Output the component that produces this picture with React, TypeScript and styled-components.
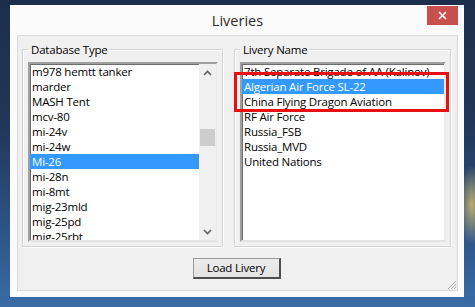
import React from "react";
import styled, { createGlobalStyle } from "styled-components";

const GlobalStyle = createGlobalStyle`
  html, body {
    margin: 0;
    padding: 0;
    width: 475px;
    height: 307px;
    overflow: hidden;
  }
  body {
    font-family: "Open Sans", "Noto Sans", "Liberation Sans", sans-serif;
    background:
      radial-gradient(ellipse 14px 40px at 472px 205px, rgba(214, 190, 110, 0.85), rgba(214, 190, 110, 0) 100%),
      linear-gradient(to bottom, #1d2e4c 0%, #213658 40%, #2d5488 75%, #3a6ca6 100%);
  }
`;

const Desktop = styled.div`
  box-sizing: border-box;
  width: 475px;
  height: 307px;
  padding: 5px 0 0 10px;
`;

const Window = styled.div`
  box-sizing: border-box;
  width: 454px;
  height: 292px;
  background: #fbfbfb;
  padding: 0 6px 6px 7px;
  display: flex;
  flex-direction: column;
`;

const TitleBar = styled.div`
  height: 30px;
  display: grid;
  grid-template-columns: 1fr auto 1fr;
  align-items: start;
`;

const Title = styled.div`
  grid-column: 2;
  font-size: 14.5px;
  line-height: 30px;
  padding-top: 1px;
  color: #2b2b2b;
`;

const CloseButton = styled.div`
  grid-column: 3;
  justify-self: end;
  margin-top: 1px;
  width: 31px;
  height: 19px;
  background: #c7504f;
  display: flex;
  align-items: center;
  justify-content: center;
`;

const Content = styled.div`
  position: relative;
  flex: 1;
  box-sizing: border-box;
  background: #f0f0f0;
  border: 1px solid #dadada;
  padding: 6px 6px 11px 4px;
  display: flex;
  flex-direction: column;
  align-items: center;
  gap: 11px;
  font-size: 11.5px;
  letter-spacing: -0.2px;
`;

const Groups = styled.div`
  align-self: stretch;
  display: flex;
  gap: 11px;
  height: 205px;
`;

const Group = styled.fieldset<{ $width: number }>`
  box-sizing: border-box;
  width: ${(p) => p.$width}px;
  margin: 0;
  padding: 5px 4px 4px 5px;
  border: 1px solid #d3d3d3;
  box-shadow: inset 1px 1px 0 #ffffff, 1px 1px 0 #ffffff;
  min-width: 0;
  display: flex;
  flex-direction: column;
`;

const Legend = styled.legend`
  line-height: 15px;
  padding: 0 2px 0 3px;
  margin-left: 0;
  color: #000;
`;

const ListArea = styled.div`
  position: relative;
  flex: 1;
  min-height: 0;
  display: flex;
`;

const ListBox = styled.div`
  flex: 1;
  min-width: 0;
  display: flex;
  background: #fff;
  border-style: solid;
  border-width: 2px;
  border-color: #a0a0a0 #ececec #e3e3e3 #a0a0a0;
  box-shadow: inset 1px 1px 0 #6d6d6d;
  overflow: hidden;
`;

const Items = styled.div`
  flex: 1;
  min-width: 0;
  overflow: hidden;
  padding-top: 0;
`;

const Item = styled.div<{ $selected?: boolean }>`
  height: 15px;
  line-height: 15px;
  padding-left: 2px;
  white-space: nowrap;
  color: ${(p) => (p.$selected ? "#ffffff" : "#000000")};
  background: ${(p) => (p.$selected ? "#3399ff" : "transparent")};
`;

const ScrollBar = styled.div`
  width: 17px;
  display: flex;
  flex-direction: column;
  background: #f0f0f0;
`;

const ScrollArrow = styled.div`
  height: 17px;
  display: flex;
  align-items: center;
  justify-content: center;
`;

const Track = styled.div`
  flex: 1;
  position: relative;
`;

const Thumb = styled.div<{ $top: number }>`
  position: absolute;
  left: 1px;
  right: 1px;
  top: ${(p) => p.$top}px;
  height: 17px;
  background: #cdcdcd;
`;

const Highlight = styled.div`
  position: absolute;
  left: -6px;
  top: 10px;
  width: 215px;
  height: 40px;
  box-sizing: border-box;
  border: 3px solid #e81010;
  pointer-events: none;
`;

const Button = styled.button`
  box-sizing: border-box;
  width: 88px;
  height: 21px;
  padding: 0 0 1px 0;
  font-family: inherit;
  font-size: 11.5px;
  letter-spacing: -0.2px;
  color: #000;
  background: linear-gradient(to bottom, #ededed, #e2e2e2);
  border-style: solid;
  border-width: 1px 2px 2px 1px;
  border-color: #9a9a9a #4d4d4d #4d4d4d #9a9a9a;
`;

const Grip = styled.svg`
  position: absolute;
  right: 0;
  bottom: 0;
`;

const dbTypes = [
  "m978 hemtt tanker",
  "marder",
  "MASH Tent",
  "mcv-80",
  "mi-24v",
  "mi-24w",
  "Mi-26",
  "mi-28n",
  "mi-8mt",
  "mig-23mld",
  "mig-25pd",
  "mig-25rbt",
];

const liveries = [
  "7th Separate Brigade of AA (Kalinov)",
  "Algerian Air Force SL-22",
  "China Flying Dragon Aviation",
  "RF Air Force",
  "Russia_FSB",
  "Russia_MVD",
  "United Nations",
];

const Chevron = ({ up }: { up?: boolean }) => (
  <svg width="9" height="6" viewBox="0 0 9 6">
    <polyline
      points={up ? "1,5 4.5,1.5 8,5" : "1,1 4.5,4.5 8,1"}
      fill="none"
      stroke="#606060"
      strokeWidth="1.6"
    />
  </svg>
);

export default function App() {
  return (
    <>
      <GlobalStyle />
      <Desktop>
        <Window>
          <TitleBar>
            <Title>Liveries</Title>
            <CloseButton>
              <svg width="9" height="9" viewBox="0 0 9 9">
                <path d="M1 1L8 8M8 1L1 8" stroke="#fff" strokeWidth="1.6" />
              </svg>
            </CloseButton>
          </TitleBar>
          <Content>
            <Groups>
              <Group $width={201}>
                <Legend>Database Type</Legend>
                <ListArea>
                  <ListBox>
                    <Items>
                      {dbTypes.map((t) => (
                        <Item key={t} $selected={t === "Mi-26"}>
                          {t}
                        </Item>
                      ))}
                    </Items>
                    <ScrollBar>
                      <ScrollArrow>
                        <Chevron up />
                      </ScrollArrow>
                      <Track>
                        <Thumb $top={48} />
                      </Track>
                      <ScrollArrow>
                        <Chevron />
                      </ScrollArrow>
                    </ScrollBar>
                  </ListBox>
                </ListArea>
              </Group>
              <Group $width={217}>
                <Legend>Livery Name</Legend>
                <ListArea>
                  <ListBox>
                    <Items>
                      {liveries.map((t) => (
                        <Item key={t} $selected={t === "Algerian Air Force SL-22"}>
                          {t}
                        </Item>
                      ))}
                    </Items>
                  </ListBox>
                  <Highlight />
                </ListArea>
              </Group>
            </Groups>
            <Button>Load Livery</Button>
            <Grip width="12" height="12" viewBox="0 0 12 12">
              <path
                d="M11 3L3 11M11 6L6 11M11 9L9 11"
                stroke="#a8a8a8"
                strokeWidth="1"
              />
            </Grip>
          </Content>
        </Window>
      </Desktop>
    </>
  );
}
